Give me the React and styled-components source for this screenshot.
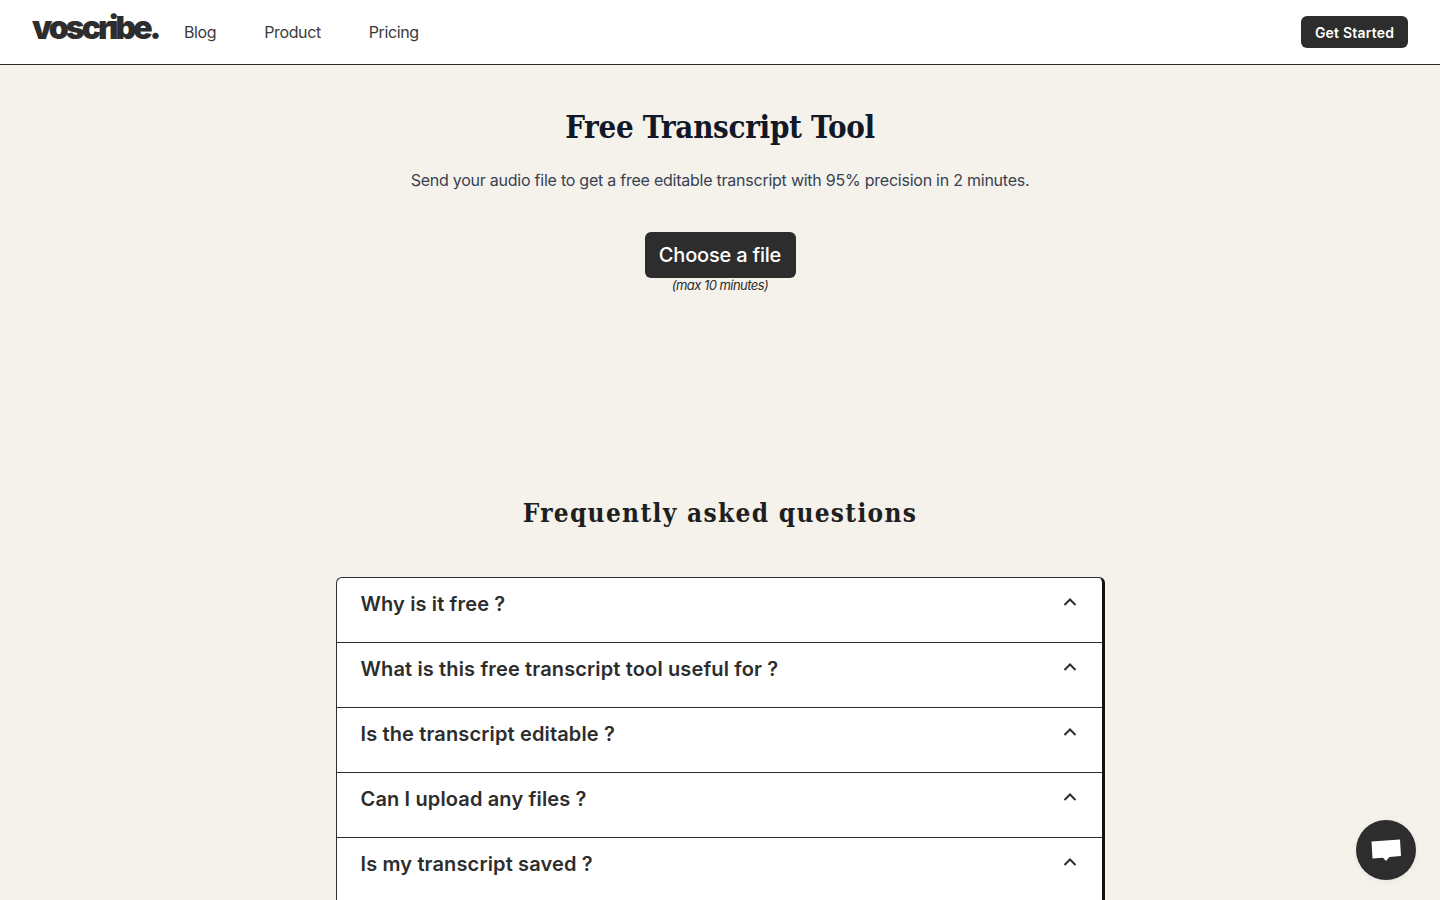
import React from "react";
import styled, { createGlobalStyle } from "styled-components";

const Global = createGlobalStyle`
  html, body { margin: 0; padding: 0; background: #f5f2ec; }
  body { font-family: "Inter", "Liberation Sans", sans-serif; color: #2d2d2d; overflow: hidden; height: 900px; }
  * { box-sizing: border-box; }
`;

const Header = styled.header`
  height: 65px;
  background: #fff;
  border-bottom: 1px solid #2d2d2d;
  display: flex;
  align-items: center;
  padding: 0 32px;
`;
const Logo = styled.a`
  font-family: "Inter", sans-serif;
  font-weight: 900;
  font-size: 32px;
  letter-spacing: -2.95px;
  line-height: 1;
  color: #2d2d2d;
  width: 152px;
  margin-top: -8px;
`;
const Nav = styled.nav`
  display: flex;
  gap: 48px;
  flex: 1;
  margin-top: -1px;
`;
const NavLink = styled.a`
  font-size: 16px;
  letter-spacing: -0.38px;
  color: #3a3a3a;
`;
const GetStarted = styled.button`
  width: 107px;
  height: 32px;
  border: none;
  border-radius: 6px;
  background: #2d2d2d;
  color: #fff;
  font: 600 14px "Inter", sans-serif;
  letter-spacing: 0.2px;
`;
const Main = styled.main`
  display: flex;
  flex-direction: column;
  align-items: center;
`;
const Title = styled.h1`
  margin: 42px 0 0;
  font-family: "DejaVu Serif Condensed", "DejaVu Serif", serif;
  font-weight: 700;
  font-size: 31px;
  line-height: 40px;
  letter-spacing: -0.3px;
  color: #111827;
`;
const Lead = styled.p`
  margin: 21px 0 0;
  font-size: 16px;
  line-height: 24px;
  letter-spacing: -0.24px;
  color: #374151;
`;
const ChooseFile = styled.button`
  margin-top: 40px;
  width: 151px;
  height: 46px;
  border: none;
  border-radius: 6px;
  background: #2d2d2d;
  color: #fff;
  font: 500 20px "Inter", sans-serif;
  letter-spacing: -0.2px;
`;
const Note = styled.span`
  font-size: 13px;
  line-height: 15px;
  font-style: italic;
  letter-spacing: -0.55px;
  color: #2d2d2d;
`;
const FaqTitle = styled.h2`
  margin: 202px 0 0;
  font-family: "DejaVu Serif Condensed", "DejaVu Serif", serif;
  font-weight: 700;
  font-size: 26px;
  line-height: 36px;
  letter-spacing: 1.3px;
  color: #1f1f1f;
`;
const Accordion = styled.section`
  margin-top: 46px;
  width: 769px;
  background: #fff;
  border: 1px solid #2d2d2d;
  border-right: 3px solid #111;
  border-radius: 6px 6px 0 0;
`;
const Row = styled.div`
  height: ${(p) => (p.$first ? "64px" : "65px")};
  padding: ${(p) => (p.$first ? "12px" : "12px")} 24px 0;
  display: flex;
  justify-content: space-between;
  align-items: flex-start;
  border-top: ${(p) => (p.$first ? "none" : "1px solid #2d2d2d")};
`;
const Question = styled.span`
  font-size: 20px;
  line-height: 28px;
  font-weight: 600;
  letter-spacing: 0.14px;
  color: #2d2d2d;
`;
const Chevron = styled.svg`
  width: 24px;
  height: 24px;
  margin: 0 -4px 0 0;
  fill: none;
  stroke: #2d2d2d;
  stroke-width: 2;
`;
const Chat = styled.button`
  position: fixed;
  right: 24px;
  bottom: 20px;
  width: 60px;
  height: 60px;
  border: none;
  border-radius: 50%;
  background: #2d2d2d;
  display: flex;
  align-items: center;
  justify-content: center;
  box-shadow: 0 1px 6px rgba(0, 0, 0, 0.06);
`;

const questions = [
  "Why is it free ?",
  "What is this free transcript tool useful for ?",
  "Is the transcript editable ?",
  "Can I upload any files ?",
  "Is my transcript saved ?",
];

export default function App() {
  return (
    <>
      <Global />
      <Header>
        <Logo>voscribe.</Logo>
        <Nav>
          <NavLink>Blog</NavLink>
          <NavLink>Product</NavLink>
          <NavLink>Pricing</NavLink>
        </Nav>
        <GetStarted>Get Started</GetStarted>
      </Header>
      <Main>
        <Title>Free Transcript Tool</Title>
        <Lead>Send your audio file to get a free editable transcript with 95% precision in 2 minutes.</Lead>
        <ChooseFile>Choose a file</ChooseFile>
        <Note>(max 10 minutes)</Note>
        <FaqTitle>Frequently asked questions</FaqTitle>
        <Accordion>
          {questions.map((q, i) => (
            <Row key={q} $first={i === 0}>
              <Question>{q}</Question>
              <Chevron viewBox="0 0 24 24">
                <path d="M6.5 15 12 9.5 17.5 15" />
              </Chevron>
            </Row>
          ))}
        </Accordion>
      </Main>
      <Chat aria-label="Chat">
        <svg width="32" height="28" viewBox="0 0 32 28">
          <path d="M1.5 5.5 30 3.5 31 20 19.5 21 16 25 13 21.8 2.5 22.5Z" fill="#fff" />
        </svg>
      </Chat>
    </>
  );
}
